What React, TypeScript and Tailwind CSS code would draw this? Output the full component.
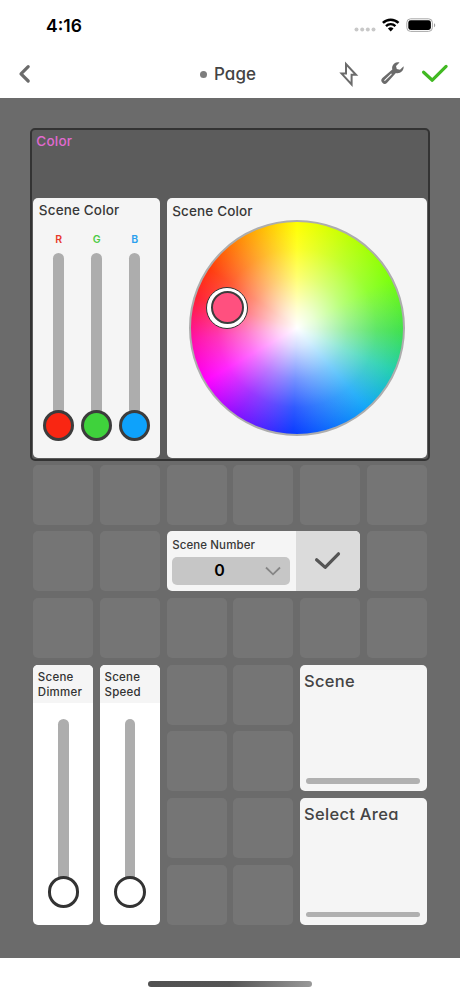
import clsx from "clsx";

const StatusBar = () => {
  return (
    <div className="flex h-[50px] items-center justify-between pl-[46px] pr-[24px]">
      <span className="pt-[2px] text-[17.5px] font-semibold leading-none text-black">
        4:16
      </span>
      <svg width="82" height="16" viewBox="354 17 82 16" fill="none">
        <circle cx="356.5" cy="29.5" r="2" fill="#c8c8c8" />
        <circle cx="362.2" cy="29.5" r="2" fill="#c8c8c8" />
        <circle cx="367.8" cy="29.5" r="2" fill="#c8c8c8" />
        <circle cx="373.5" cy="29.5" r="2" fill="#c8c8c8" />
        <path d="M382.9 22.9a11 11 0 0 1 15.6 0" stroke="#000" strokeWidth="2.5" />
        <path d="M386 26.1a6.6 6.6 0 0 1 9.4 0" stroke="#000" strokeWidth="2.4" />
        <path d="M387.9 28.6a4.2 4.2 0 0 1 5.6 0L390.7 31.6z" fill="#000" />
        <rect x="406.8" y="18.8" width="25.6" height="12.6" rx="3.8" stroke="#a8a8a8" />
        <rect x="408.3" y="20.3" width="22.6" height="9.6" rx="2.4" fill="#000" />
        <path d="M434 23.2c1.7.7 1.7 3.3 0 4z" fill="#a0a0a0" />
      </svg>
    </div>
  );
};

const NavBar = () => {
  return (
    <div className="grid h-12 grid-cols-[1fr_auto_1fr] items-center pl-[18px] pr-[10px]">
      <svg width="14" height="22" viewBox="18 63 14 22" fill="none">
        <path
          d="M28.2 66.6 21 73.8l7.2 7.2"
          stroke="#6b6b6b"
          strokeWidth="3.2"
          strokeLinecap="round"
          strokeLinejoin="round"
        />
      </svg>
      <div className="flex items-center gap-[7px] pr-[12px]">
        <span className="size-[7px] rounded-full bg-[#7d7d7d]" />
        <h1 className="text-[17px] font-medium leading-6 tracking-[0.1px] text-[#444]">Page</h1>
      </div>
      <svg
        className="justify-self-end"
        width="112"
        height="30"
        viewBox="338 59 112 30"
        fill="none"
      >
        <path
          d="M346 64v9.600h-4.400l10 10.800V74.700h4.400z"
          stroke="#6b6b6b"
          strokeWidth="2"
        />
        <path
          d="M403.6 66.3 400 69.8l-3.2-.8-.8-3.1 3.5-3.5c-3-1-6.5.8-7.3 4.3-.2 1-.1 1.9.1 2.7l-9.9 8.7a3.300 3.300 0 1 0 4.700 4.700l8.800-9.800c3.900 1 8.300-1.900 7.700-6.700z"
          fill="#6b6b6b"
        />
        <path d="M384.8 80.3 391.2 74.200" stroke="#fff" strokeWidth="1.1" strokeLinecap="round" />
        <path
          d="m423.6 72.2 8.700 8 13.800-13.800"
          stroke="#41b922"
          strokeWidth="3.2"
          strokeLinecap="round"
          strokeLinejoin="round"
        />
      </svg>
    </div>
  );
};

const ColorFader = ({
  label,
  text,
  fill,
}: {
  label: string;
  text: string;
  fill: string;
}) => {
  return (
    <div className="flex w-8 flex-col items-center">
      <span className={clsx("text-[10.5px] font-semibold leading-4", text)}>{label}</span>
      <div className="mt-[5px] h-[172px] w-[10.5px] rounded-full bg-[#adadad]" />
      <div
        className={clsx(
          "relative -mt-[14.5px] size-[31px] rounded-full border-[3px] border-[#3c3c3c]",
          fill
        )}
      />
    </div>
  );
};

const ColorWheel = () => {
  return (
    <div className="relative size-[216px] rounded-full border-2 border-[#adadad] bg-[radial-gradient(circle_closest-side,#fff_0%,#ffffffd0_18%,#ffffff70_48%,#ffffff28_75%,#ffffff00_100%),conic-gradient(#ffff00_0deg,#b8ff06_32deg,#7dff0c_62deg,#3fe04f_92deg,#22cfae_114deg,#12a6f8_139deg,#0a3cff_182deg,#8a10ff_215deg,#ff00ff_240deg,#ff0fa8_264deg,#ff2030_287deg,#ff3a0c_304deg,#ff9a08_331deg,#ffff00_360deg)]">
      <div className="absolute left-[15.5px] top-[65px] flex size-[42px] items-center justify-center rounded-full border border-[#333] bg-white">
        <div className="size-[33px] rounded-full border-[2.5px] border-[#3c3c3c] bg-[#ff507f]" />
      </div>
    </div>
  );
};

const SceneFader = ({ name, className }: { name: string; className: string }) => {
  return (
    <div
      className={clsx(
        "flex flex-col items-center overflow-hidden rounded-[5px] bg-white",
        className
      )}
    >
      <p className="h-[38px] w-full bg-[#f5f5f5] pl-[4.5px] pt-[5px] text-[11.5px] font-medium leading-[15.5px] tracking-[0.25px] text-[#333]">
        Scene
        <br />
        {name}
      </p>
      <div className="mt-[16px] h-[172px] w-[10.5px] rounded-full bg-[#adadad]" />
      <div className="relative -mt-[14.5px] size-[31.5px] rounded-full border-[3px] border-[#333] bg-white" />
    </div>
  );
};

const AreaCard = ({ title, className }: { title: string; className: string }) => {
  return (
    <div
      className={clsx(
        "flex flex-col justify-between rounded-[5px] bg-[#f5f5f5] px-[6.5px] pb-[7.5px] pt-[4px]",
        className
      )}
    >
      <h2 className="-ml-[2.5px] text-[16.5px] font-medium leading-6 tracking-[0.3px] text-[#444]">
        {title}
      </h2>
      <div className="h-[5.5px] rounded-full bg-[#b0b0b0]" />
    </div>
  );
};

const emptyCells = [
  "col-start-1 row-start-6",
  "col-start-2 row-start-6",
  "col-start-3 row-start-6",
  "col-start-4 row-start-6",
  "col-start-5 row-start-6",
  "col-start-6 row-start-6",
  "col-start-1 row-start-7",
  "col-start-2 row-start-7",
  "col-start-6 row-start-7",
  "col-start-1 row-start-8",
  "col-start-2 row-start-8",
  "col-start-3 row-start-8",
  "col-start-4 row-start-8",
  "col-start-5 row-start-8",
  "col-start-6 row-start-8",
  "col-start-3 row-start-9",
  "col-start-4 row-start-9",
  "col-start-3 row-start-10",
  "col-start-4 row-start-10",
  "col-start-3 row-start-11",
  "col-start-4 row-start-11",
  "col-start-3 row-start-12",
  "col-start-4 row-start-12",
];

const App = () => {
  return (
    <div className="flex h-[996px] w-[460px] flex-col bg-white font-['Inter',sans-serif] [font-feature-settings:'cv11']">
      <header className="h-[98px]">
        <StatusBar />
        <NavBar />
      </header>

      <main className="grid h-[860px] grid-cols-6 grid-rows-12 gap-[6.67px] bg-[#6b6b6b] p-[33.33px]">
        {emptyCells.map((cell) => (
          <div key={cell} className={clsx("rounded-[5px] bg-[#757575]", cell)} />
        ))}

        <section className="col-span-6 col-start-1 row-span-5 row-start-1 -m-[3px] rounded-[5px] border-2 border-[#333] bg-[#5c5c5c] px-1 pt-px">
          <h2 className="text-[13.5px] font-medium leading-5 tracking-[0.2px] text-[#e06ad0]">
            Color
          </h2>
        </section>

        <section className="col-span-2 col-start-1 row-span-4 row-start-2 rounded-[5px] bg-[#f5f5f5] px-[5.5px] pt-[2px]">
          <h3 className="text-[13.5px] font-medium leading-5 tracking-[0.15px] text-[#383838]">
            Scene Color
          </h3>
          <div className="mt-[12px] flex justify-center gap-[6px]">
            <ColorFader label="R" text="text-[#e8392c]" fill="bg-[#f92612]" />
            <ColorFader label="G" text="text-[#4ccb45]" fill="bg-[#3fd23c]" />
            <ColorFader label="B" text="text-[#2ba0ee]" fill="bg-[#0ea2fb]" />
          </div>
        </section>

        <section className="col-span-4 col-start-3 row-span-4 row-start-2 rounded-[5px] bg-[#f5f5f5] px-[5.5px] pt-[3px]">
          <h3 className="text-[13.5px] font-medium leading-5 tracking-[0.15px] text-[#383838]">
            Scene Color
          </h3>
          <div className="-mt-[1px] flex justify-center">
            <ColorWheel />
          </div>
        </section>

        <section className="col-span-3 col-start-3 row-start-7 flex w-[193.5px] overflow-hidden rounded-[5px] bg-[#f5f5f5]">
          <div className="w-[129px] px-[5.5px] pt-[6px]">
            <h3 className="text-[11.5px] font-medium leading-4 tracking-[0.1px] text-[#383838]">
              Scene Number
            </h3>
            <div className="mt-[3.5px] flex h-[28px] w-[118px] items-center rounded-[5px] bg-[#c6c6c6] pl-[42px] pr-[9px]">
              <span className="flex-1 pb-px text-[16px] font-semibold leading-none text-black">
                0
              </span>
              <svg width="16" height="10" viewBox="0 0 16 10" fill="none">
                <path d="m1 1.5 7 6.800 7-6.800" stroke="#858585" strokeWidth="1.8" />
              </svg>
            </div>
          </div>
          <button className="flex flex-1 items-center justify-center bg-[#dbdbdb]">
            <svg width="28" height="20" viewBox="0 0 28 20" fill="none">
              <path
                d="m2.6 8.700 8.600 7.700L24.500 2.800"
                stroke="#555"
                strokeWidth="3.2"
                strokeLinecap="round"
                strokeLinejoin="round"
              />
            </svg>
          </button>
        </section>

        <SceneFader name="Dimmer" className="col-start-1 row-span-4 row-start-9" />
        <SceneFader name="Speed" className="col-start-2 row-span-4 row-start-9" />
        <AreaCard title="Scene" className="col-span-2 col-start-5 row-span-2 row-start-9" />
        <AreaCard
          title="Select Area"
          className="col-span-2 col-start-5 row-span-2 row-start-11"
        />
      </main>

      <footer className="flex flex-1 justify-center pt-[23px]">
        <div className="h-[5.5px] w-[164px] rounded-full bg-linear-to-r from-[#505050] via-[#555] to-[#999]" />
      </footer>
    </div>
  );
};

export default App;
